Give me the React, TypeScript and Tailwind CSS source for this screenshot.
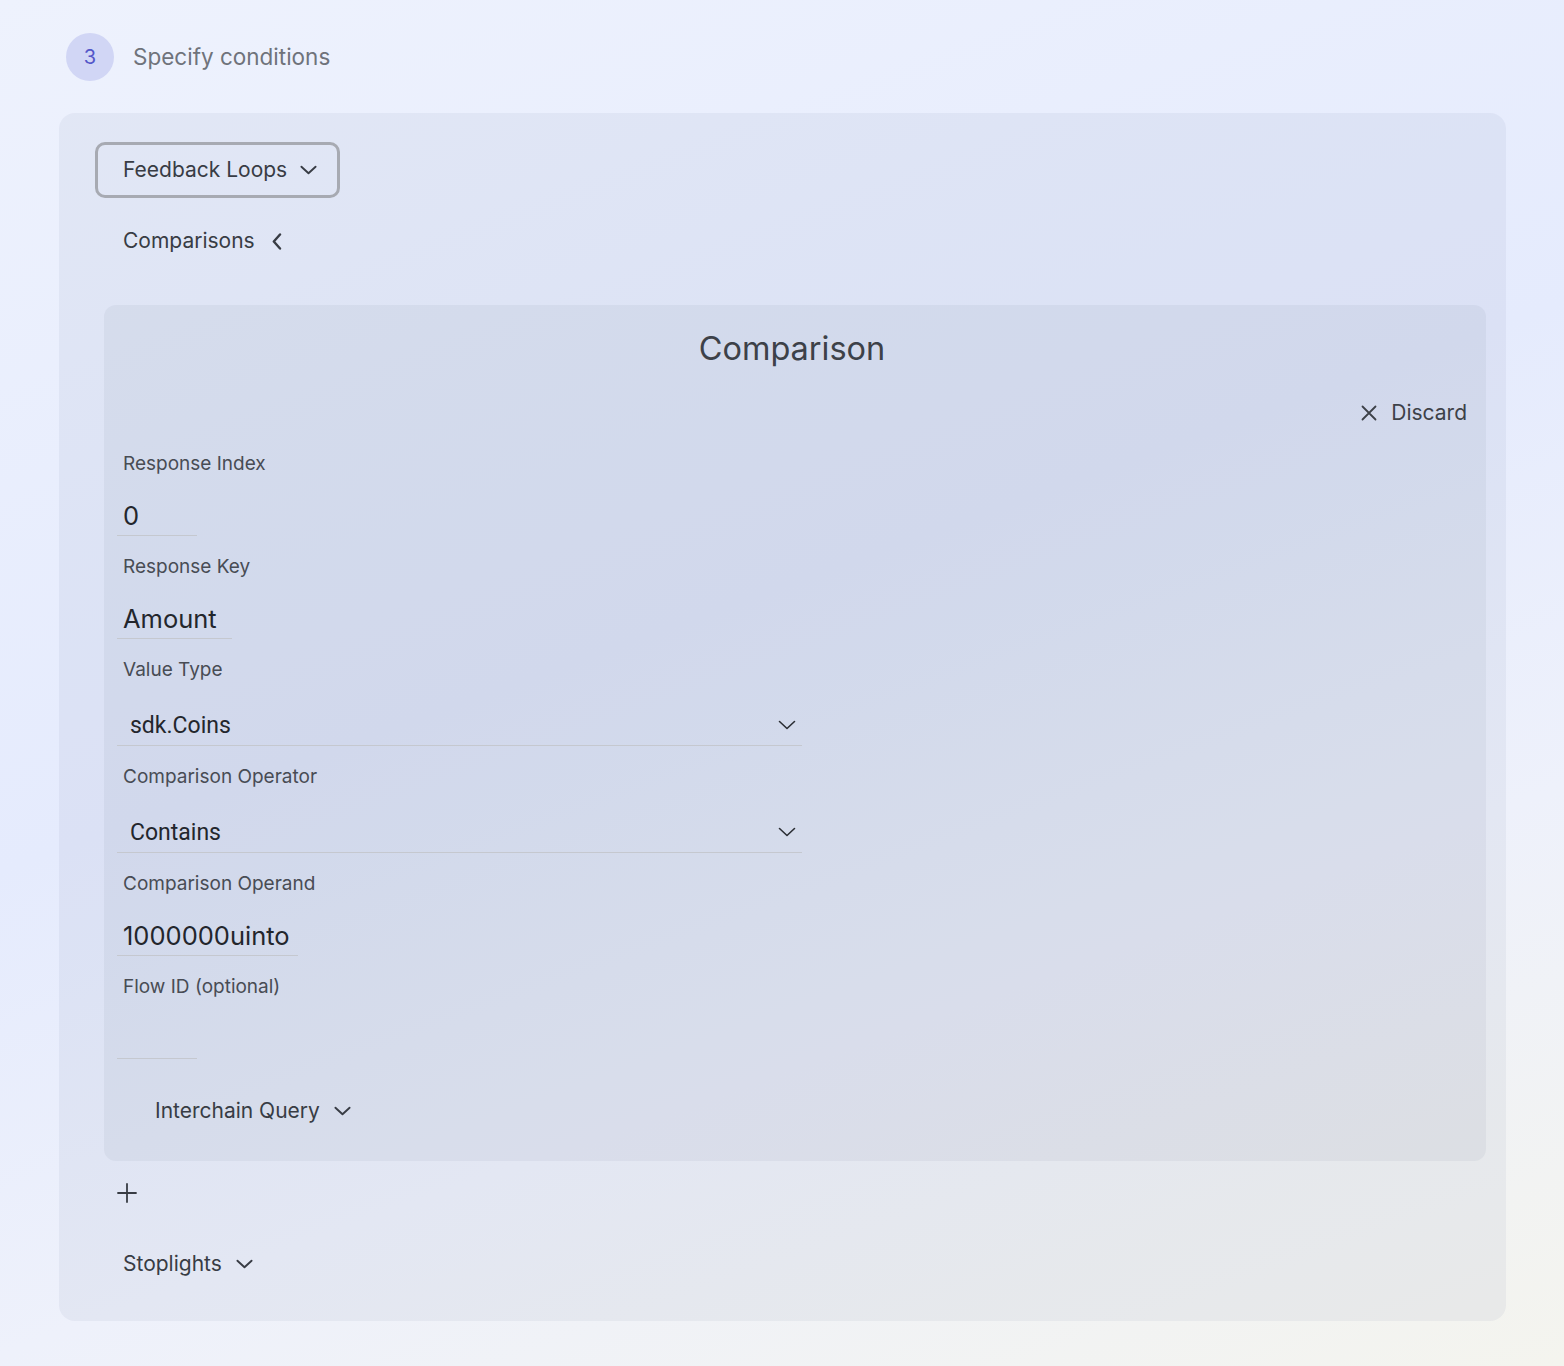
import { FunctionComponent } from "react";

const font = "font-['Inter','Noto_Sans',sans-serif]";

const ChevronDown: FunctionComponent<{ className?: string; strokeWidth?: number }> = ({
  className = "",
  strokeWidth = 2,
}) => (
  <svg
    className={className}
    viewBox="0 0 18 10"
    fill="none"
    stroke="currentColor"
    strokeWidth={strokeWidth}
    strokeLinecap="round"
    strokeLinejoin="round"
  >
    <path d="M1.5 1.5L9 8.5l7.5-7" />
  </svg>
);

const Label: FunctionComponent<{ text: string }> = ({ text }) => (
  <div className="h-[26px] pt-[1px] pl-[6px] flex items-center text-[19px] text-[#484c54]">
    {text}
  </div>
);

const TextField: FunctionComponent<{ label: string; value: string; width: string }> = ({
  label,
  value,
  width,
}) => (
  <div className="flex flex-col pb-[18px]">
    <Label text={label} />
    <div
      className={`mt-[19px] h-[40px] ${width} px-[6px] pt-[2px] flex items-center border-b border-[#c5c8cf] text-[25.5px] text-[#23262c]`}
    >
      {value}
    </div>
  </div>
);

const SelectField: FunctionComponent<{ label: string; value: string }> = ({ label, value }) => (
  <div className="flex flex-col pb-[18px]">
    <Label text={label} />
    <div className="mt-[21px] h-[42px] w-[685px] pl-[13px] pr-[6px] pt-[4px] flex items-center justify-between border-b border-[#c5c8cf]">
      <span className="font-['Roboto',sans-serif] text-[23px] text-[#23262c]">{value}</span>
      <ChevronDown className="w-[18px] h-[10px] -mt-[4px] text-[#2b2e34]" strokeWidth={1.6} />
    </div>
  </div>
);

const App: FunctionComponent = () => {
  return (
    <div
      className={`min-h-[1366px] w-full ${font} bg-[linear-gradient(160deg,#eef2fd_0%,#e5ebfd_45%,#eef1fb_70%,#f4f4ee_100%)] px-[59px] pt-[33px] pb-[45px] box-border`}
    >
      <div className="flex flex-row items-center gap-[19px] pl-[7px]">
        <div className="w-[48px] h-[48px] rounded-full bg-[#d1d6f5] flex items-center justify-center text-[20px] text-[#5457c9]">
          3
        </div>
        <div className="text-[22.5px] text-[#6f737b]">Specify conditions</div>
      </div>

      <div className="mt-[32px] w-[1447px] rounded-[16px] bg-[rgba(100,110,150,0.08)] pl-[36px] pr-[20px] pt-[29px] pb-[43px] flex flex-col items-start">
        <button className="h-[56px] w-[245px] rounded-[10px] border-[3px] border-solid border-[#a7aab2] bg-transparent flex flex-row items-center pl-[25px] gap-[13px] text-[21px] text-[#383c44]">
          Feedback Loops
          <ChevronDown className="w-[17px] h-[10px] text-[#383c44]" />
        </button>

        <div className="mt-[29px] h-[28px] pl-[28px] flex flex-row items-center gap-[17px] text-[21px] text-[#383c44]">
          Comparisons
          <svg className="w-[10px] h-[17px]" viewBox="0 0 10 17" fill="none" stroke="currentColor" strokeWidth={2.4} strokeLinecap="round" strokeLinejoin="round">
            <path d="M8 1.5L1.8 8.5 8 15.5" />
          </svg>
        </div>

        <div className="mt-[50px] ml-[9px] self-stretch rounded-[12px] bg-[rgba(100,110,140,0.08)] pl-[13px] pr-[19px] pt-[24px] pb-[36px] flex flex-col">
          <div className="h-[40px] flex items-center justify-center text-[32.5px] text-[#3d4148]">
            Comparison
          </div>
          <div className="mt-[30px] h-[28px] flex flex-row items-center justify-end gap-[14px] text-[21px] text-[#3d4148]">
            <svg className="w-[16px] h-[16px]" viewBox="0 0 16 16" fill="none" stroke="currentColor" strokeWidth={1.8} strokeLinecap="round">
              <path d="M1.5 1.5l13 13M14.5 1.5l-13 13" />
            </svg>
            Discard
          </div>

          <div className="mt-[24px] flex flex-col">
            <TextField label="Response Index" value="0" width="w-[80px]" />
            <TextField label="Response Key" value="Amount" width="w-[115px]" />
            <SelectField label="Value Type" value="sdk.Coins" />
            <SelectField label="Comparison Operator" value="Contains" />
            <TextField label="Comparison Operand" value="1000000uinto" width="w-[181px]" />
            <div className="flex flex-col">
              <Label text="Flow ID (optional)" />
              <div className="mt-[19px] h-[40px] w-[80px] border-b border-[#c5c8cf]" />
            </div>
          </div>

          <div className="mt-[38px] h-[28px] pl-[38px] flex flex-row items-center gap-[14px] text-[21px] text-[#383c44]">
            Interchain Query
            <ChevronDown className="w-[17px] h-[10px] text-[#383c44]" />
          </div>
        </div>

        <div className="mt-[20px] ml-[20px] h-[24px] w-[24px] flex items-center justify-center text-[#383c44]">
          <svg className="w-[20px] h-[20px]" viewBox="0 0 20 20" fill="none" stroke="currentColor" strokeWidth={1.8} strokeLinecap="round">
            <path d="M10 1v18M1 10h18" />
          </svg>
        </div>

        <div className="mt-[45px] h-[28px] pl-[28px] flex flex-row items-center gap-[14px] text-[21px] text-[#383c44]">
          Stoplights
          <ChevronDown className="w-[17px] h-[10px] text-[#383c44]" />
        </div>
      </div>
    </div>
  );
};

export default App;
